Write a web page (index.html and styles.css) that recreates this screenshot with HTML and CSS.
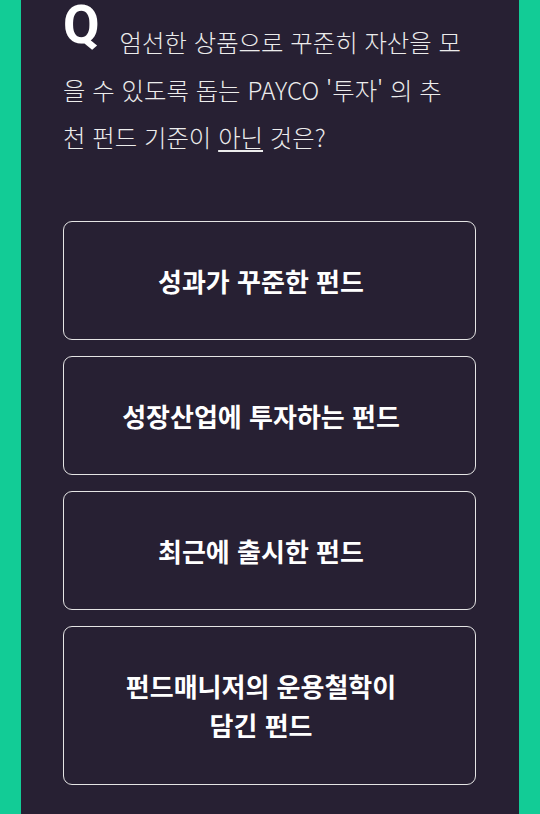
FILE: index.html
```html
<!DOCTYPE html>
<html lang="ko">
<head>
    <meta charset="UTF-8">
    <meta name="viewport" content="width=device-width, initial-scale=1.0">
    <title>PAYCO 투자 퀴즈</title>
    <link rel="stylesheet" href="styles.css">
</head>
<body>

    <div class="panel">
        <div class="question">
            <span class="q-mark">Q</span>
            <p class="q-text">엄선한 상품으로 꾸준히 자산을 모을 수 있도록 돕는 PAYCO '투자' 의 추천 펀드 기준이 <u>아닌</u> 것은?</p>
        </div>

        <ul class="options">
            <li class="option">성과가 꾸준한 펀드</li>
            <li class="option">성장산업에 투자하는 펀드</li>
            <li class="option">최근에 출시한 펀드</li>
            <li class="option">펀드매니저의 운용철학이<br>담긴 펀드</li>
        </ul>
    </div>

</body>
</html>
```

FILE: styles.css
```css
body {
    margin: 0;
    padding: 0;
    background-color: #12cc96;
    font-family: "Noto Sans CJK KR", "Noto Sans", sans-serif;
    color: white;
}

.panel {
    margin: 0 21px;
    min-height: 100vh;
    padding: 0 43px 30px 42px;
    background-color: #272033;
    box-sizing: border-box;
}

.question {
    padding-right: 14px;
}

.q-mark {
    float: left;
    margin-right: 20px;
    font-family: Roboto, "Noto Sans", sans-serif;
    font-size: 53px;
    font-weight: bold;
    line-height: 50px;
}

.q-text {
    margin: 0;
    padding-top: 18px;
    font-size: 24.4px;
    font-weight: 300;
    line-height: 47.5px;
    color: #ececec;
}

.q-text u {
    text-underline-offset: 3px;
    text-decoration-thickness: 1.5px;
}

.options {
    list-style: none;
    margin: 60px 0 0;
    padding: 0;
    display: flex;
    flex-direction: column;
    gap: 15.5px;
}

.option {
    padding: 39px 26px 39px 9px;
    border: 1.5px solid #e4e4e4;
    border-radius: 9px;
    text-align: center;
    font-size: 26px;
    font-weight: bold;
    line-height: 39.5px;
}
```
